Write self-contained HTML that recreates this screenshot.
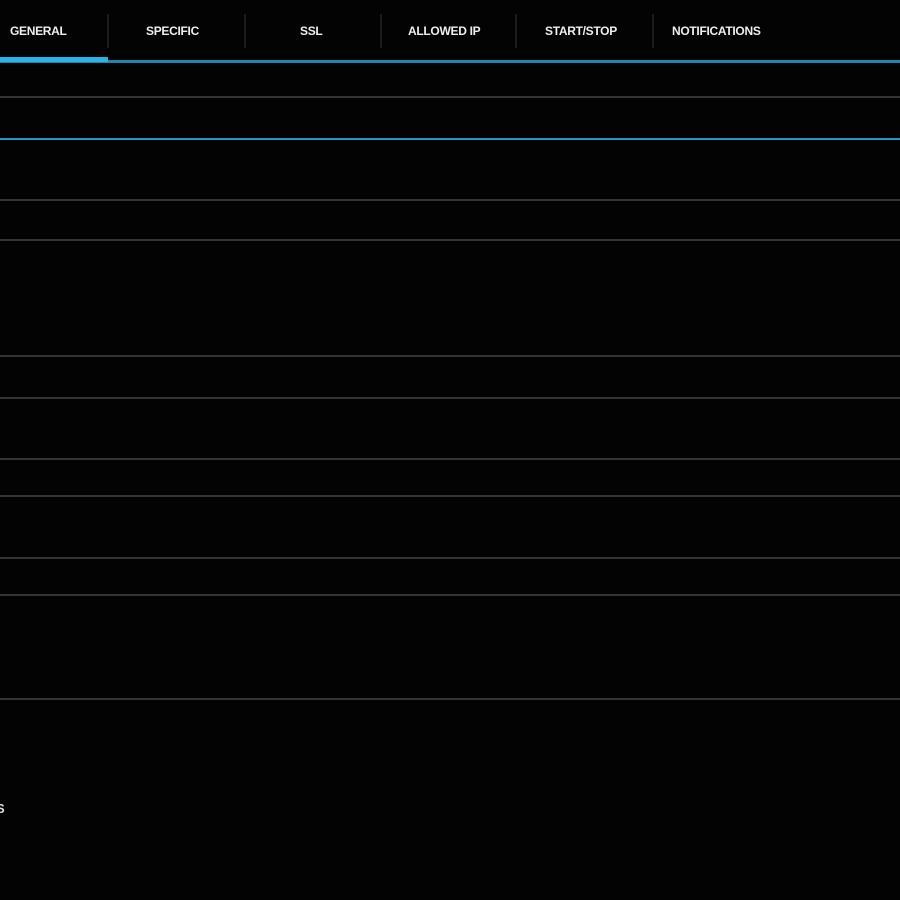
<html><body style="margin:0;background:#030303;width:900px;height:900px;position:relative;overflow:hidden;font-family:'Liberation Sans',sans-serif">
<style>
.t{position:absolute;top:24px;color:#eee;font-size:12px;font-weight:bold;letter-spacing:-0.3px}
.s{position:absolute;top:14px;width:2px;height:34px;background:#1c1c1c}
.l{position:absolute;left:0;width:900px;height:2px;background:#343434}
</style>
<div class="t" style="left:10px">GENERAL</div>
<div class="t" style="left:146px">SPECIFIC</div>
<div class="t" style="left:300px">SSL</div>
<div class="t" style="left:408px">ALLOWED IP</div>
<div class="t" style="left:545px">START/STOP</div>
<div class="t" style="left:672px">NOTIFICATIONS</div>
<div class="s" style="left:107px"></div><div class="s" style="left:244px"></div><div class="s" style="left:380px"></div><div class="s" style="left:515px"></div><div class="s" style="left:652px"></div>
<div style="position:absolute;left:0;top:60px;width:900px;height:3px;background:#1d87b0"></div>
<div style="position:absolute;left:0;top:57px;width:108px;height:5px;background:#2ab3e6"></div>
<div class="l" style="top:96px"></div>
<div style="position:absolute;left:0;top:138px;width:900px;height:2px;background:#1d9ccc"></div>
<div class="l" style="top:199px"></div><div class="l" style="top:239px"></div>
<div class="l" style="top:355px"></div><div class="l" style="top:397px"></div>
<div class="l" style="top:458px"></div><div class="l" style="top:495px"></div>
<div class="l" style="top:557px"></div><div class="l" style="top:594px"></div>
<div class="l" style="top:698px"></div>
<div style="position:absolute;left:-4px;top:801px;color:#ddd;font-size:13px;font-weight:bold">S</div>
</body></html>
